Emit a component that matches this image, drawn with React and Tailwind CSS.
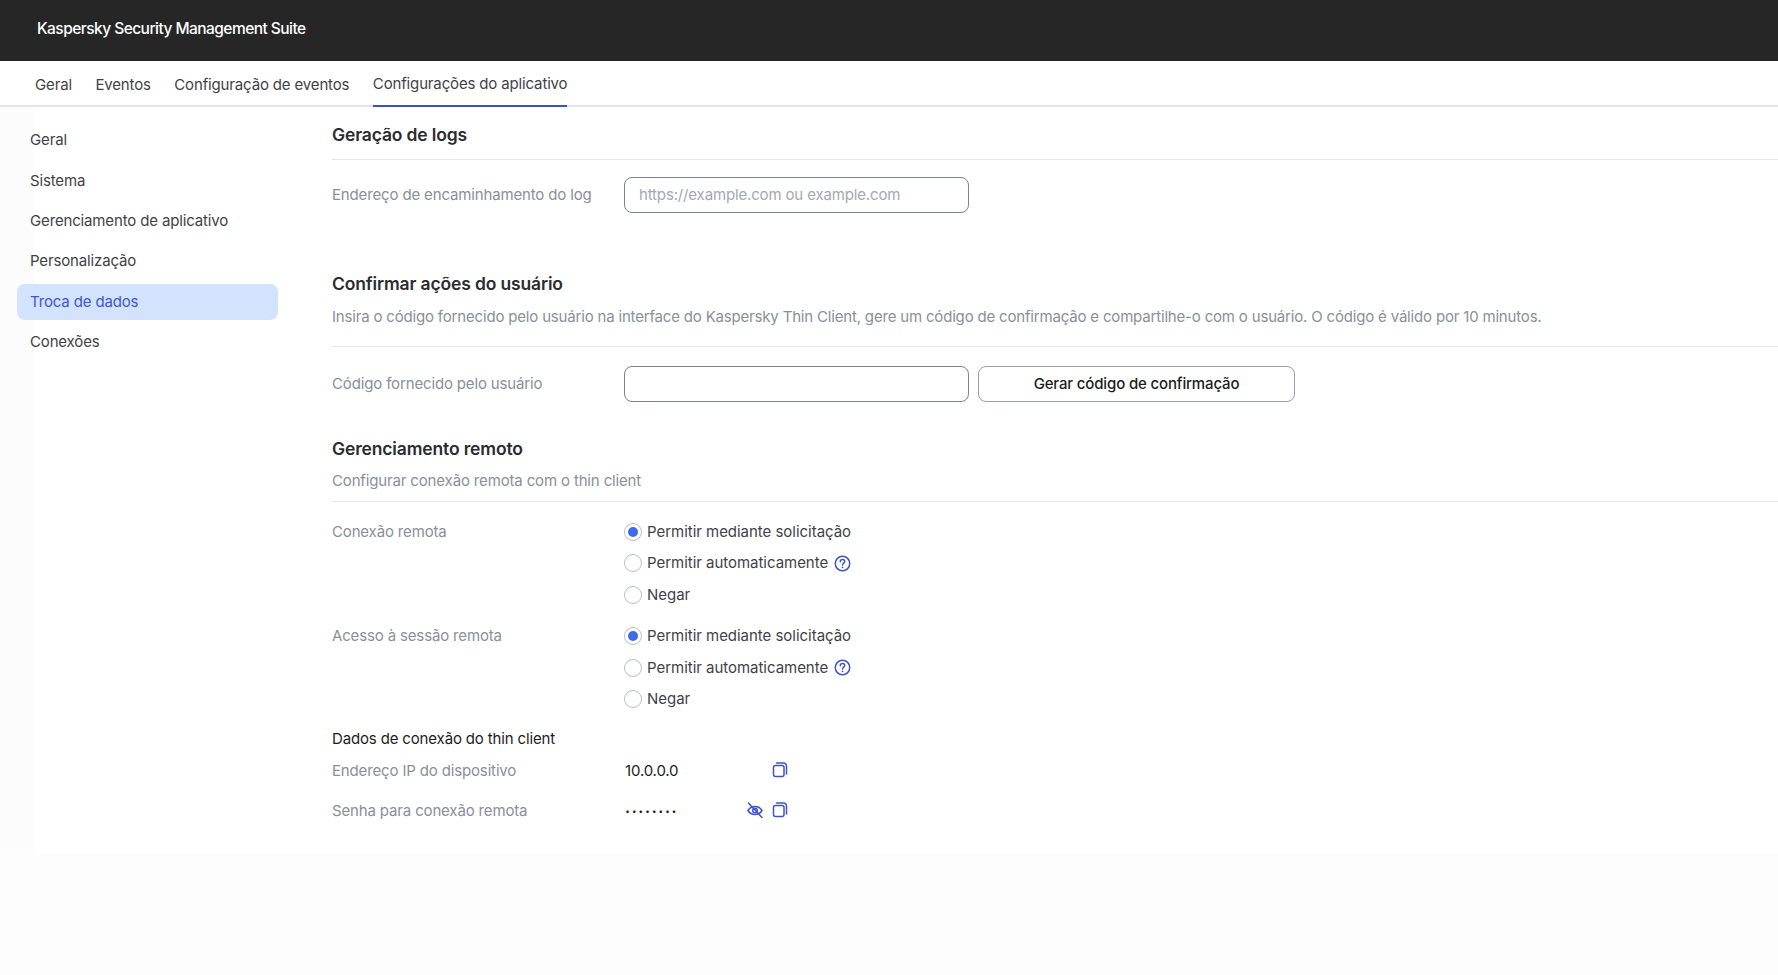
import React from 'react';

const tabs = ['Geral', 'Eventos', 'Configuração de eventos', 'Configurações do aplicativo'];
const menu = ['Geral', 'Sistema', 'Gerenciamento de aplicativo', 'Personalização', 'Troca de dados', 'Conexões'];

const CopyIcon = () => (
  <svg className="mb-[2px]" width="18" height="18" viewBox="0 0 18 18" fill="none" stroke="#3f55c5" strokeWidth="1.5">
    <rect x="2.5" y="4.5" width="10.5" height="11" rx="2" />
    <path d="M5.5 2h7a3 3 0 0 1 3 3v8" strokeLinecap="round" />
  </svg>
);

const EyeOffIcon = () => (
  <svg className="mb-[2px]" width="18" height="18" viewBox="0 0 18 18" fill="none" stroke="#3f55c5" strokeWidth="1.5">
    <path d="M2 9.5C3.500 7 6 5.500 9 5.500s5.500 1.500 7 4C14.500 12 12 13.500 9 13.500S3.500 12 2 9.500Z" />
    <circle cx="9" cy="9.500" r="2.250" />
    <path d="M2.500 2l13.500 14.500" strokeLinecap="round" />
  </svg>
);

const HelpIcon = () => (
  <svg width="17" height="17" viewBox="0 0 17 17" fill="none">
    <circle cx="8.5" cy="8.5" r="7.25" stroke="#3f55c5" strokeWidth="1.5" />
    <path d="M6.3 6.7c0-1.300 1-2.100 2.200-2.100s2.200.8 2.200 2c0 1.800-2.200 1.700-2.200 3.300" stroke="#3f55c5" strokeWidth="1.5" strokeLinecap="round" />
    <circle cx="8.5" cy="12.3" r="0.9" fill="#3f55c5" />
  </svg>
);

const Radio = ({ label, checked, help }) => (
  <div className="flex items-center h-[31.5px]">
    <span className="w-[18px] h-[18px] rounded-full border border-[#b9bdc6] bg-white flex items-center justify-center mr-[5px] shrink-0">
      {checked && <span className="w-[10px] h-[10px] rounded-full bg-[#3d6ce8]" />}
    </span>
    <span className="text-[#3f4247] tracking-[-0.002em]">{label}</span>
    {help && <span className="ml-[6px] flex"><HelpIcon /></span>}
  </div>
);

const RadioRow = ({ label }) => (
  <div className="flex">
    <div className="w-[292px] h-[31.5px] flex items-center text-[#8a8f99]">{label}</div>
    <div>
      <Radio label="Permitir mediante solicitação" checked />
      <Radio label="Permitir automaticamente" help />
      <Radio label="Negar" />
    </div>
  </div>
);

const Heading = ({ children }) => (
  <h2 className="text-[17.5px] font-semibold text-[#2a2c30] leading-[24px]">{children}</h2>
);

export default function App() {
  return (
    <div className="min-h-[975px] bg-[#fdfdfd] font-[Inter,sans-serif] text-[15px] tracking-[-0.01em]">
      {/* Header */}
      <header className="h-[61px] bg-[#262626] flex items-center pl-[37px] pb-[3px] text-white font-medium text-[15.5px] tracking-[-0.035em] shadow-[0_1px_4px_rgba(0,0,0,0.3)]">
        Kaspersky Security Management Suite
      </header>

      {/* Tabs */}
      <nav className="h-[46px] bg-white border-b-2 border-[#e3e4e8] flex gap-[23.5px] pl-[35px]">
        {tabs.map((t, i) => (
          <div
            key={t}
            className={
              i === 3
                ? 'h-[46px] flex items-center text-[#3f4247] border-b-2 border-[#3a4fc0] pt-[3px]'
                : 'h-[46px] flex items-center text-[#3f4247] pt-[3px]'
            }
          >
            {t}
          </div>
        ))}
      </nav>

      <div className="h-[746px] flex bg-[linear-gradient(to_right,#fcfcfc_34px,#ffffff_34px)]">
        {/* Sidebar */}
        <aside className="w-[332px] shrink-0 pl-[17px] pt-[15.5px]">
          <ul className="w-[261px] flex flex-col gap-[4.4px]">
            {menu.map((m) => (
              <li
                key={m}
                className={
                  m === 'Troca de dados'
                    ? 'h-[36px] rounded-[8px] pl-[13px] flex items-center bg-[#d3e2fd] text-[#3f57c9]'
                    : 'h-[36px] rounded-[8px] pl-[13px] flex items-center text-[#3f4247]'
                }
              >
                {m}
              </li>
            ))}
          </ul>
        </aside>

        {/* Content */}
        <main className="flex-1 pt-[16px]">
          <Heading>Geração de logs</Heading>
          <div className="mt-[12px] border-t border-[#e5e7ee]" />
          <div className="mt-[17px] flex items-center">
            <div className="w-[292px] text-[#8a8f99]">Endereço de encaminhamento do log</div>
            <div className="w-[345px] h-[36px] rounded-[8px] border border-[#7f838b] pl-[14px] flex items-center text-[#a3a8b2]">
              https://example.com ou example.com
            </div>
          </div>

          <div className="mt-[59px]"><Heading>Confirmar ações do usuário</Heading></div>
          <p className="mt-[9px] leading-[24px] text-[#8a8f99] tracking-[-0.012em]">
            Insira o código fornecido pelo usuário na interface do Kaspersky Thin Client, gere um código de confirmação e compartilhe-o com o usuário. O código é válido por 10 minutos.
          </p>
          <div className="mt-[17px] border-t border-[#e5e7ee]" />
          <div className="mt-[19px] flex items-center">
            <div className="w-[292px] text-[#8a8f99]">Código fornecido pelo usuário</div>
            <div className="w-[345px] h-[36px] rounded-[8px] border border-[#7f838b]" />
            <button className="ml-[9px] w-[317px] h-[36px] rounded-[8px] border border-[#9a9ea6] text-[#1d1d1b] font-medium">
              Gerar código de confirmação
            </button>
          </div>

          <div className="mt-[35px]"><Heading>Gerenciamento remoto</Heading></div>
          <p className="mt-[8px] leading-[24px] text-[#8a8f99]">Configurar conexão remota com o thin client</p>
          <div className="mt-[8px] border-t border-[#e5e7ee]" />

          <div className="mt-[14px]"><RadioRow label="Conexão remota" /></div>
          <div className="mt-[10px]"><RadioRow label="Acesso à sessão remota" /></div>

          <div className="mt-[12px] text-[#1d1d1b] leading-[24px]">Dados de conexão do thin client</div>
          <div className="mt-[8px] flex items-center h-[24px]">
            <div className="w-[293px] text-[#8a8f99]">Endereço IP do dispositivo</div>
            <div className="w-[146px] text-[#1d1d1b]">10.0.0.0</div>
            <CopyIcon />
          </div>
          <div className="mt-[16px] flex items-center h-[24px]">
            <div className="w-[293px] text-[#8a8f99]">Senha para conexão remota</div>
            <div className="w-[121px] text-[#1d1d1b] font-bold tracking-[0.11em] pt-[2px]">········</div>
            <span className="w-[25px] flex"><EyeOffIcon /></span>
            <CopyIcon />
          </div>
        </main>
      </div>
    </div>
  );
}
